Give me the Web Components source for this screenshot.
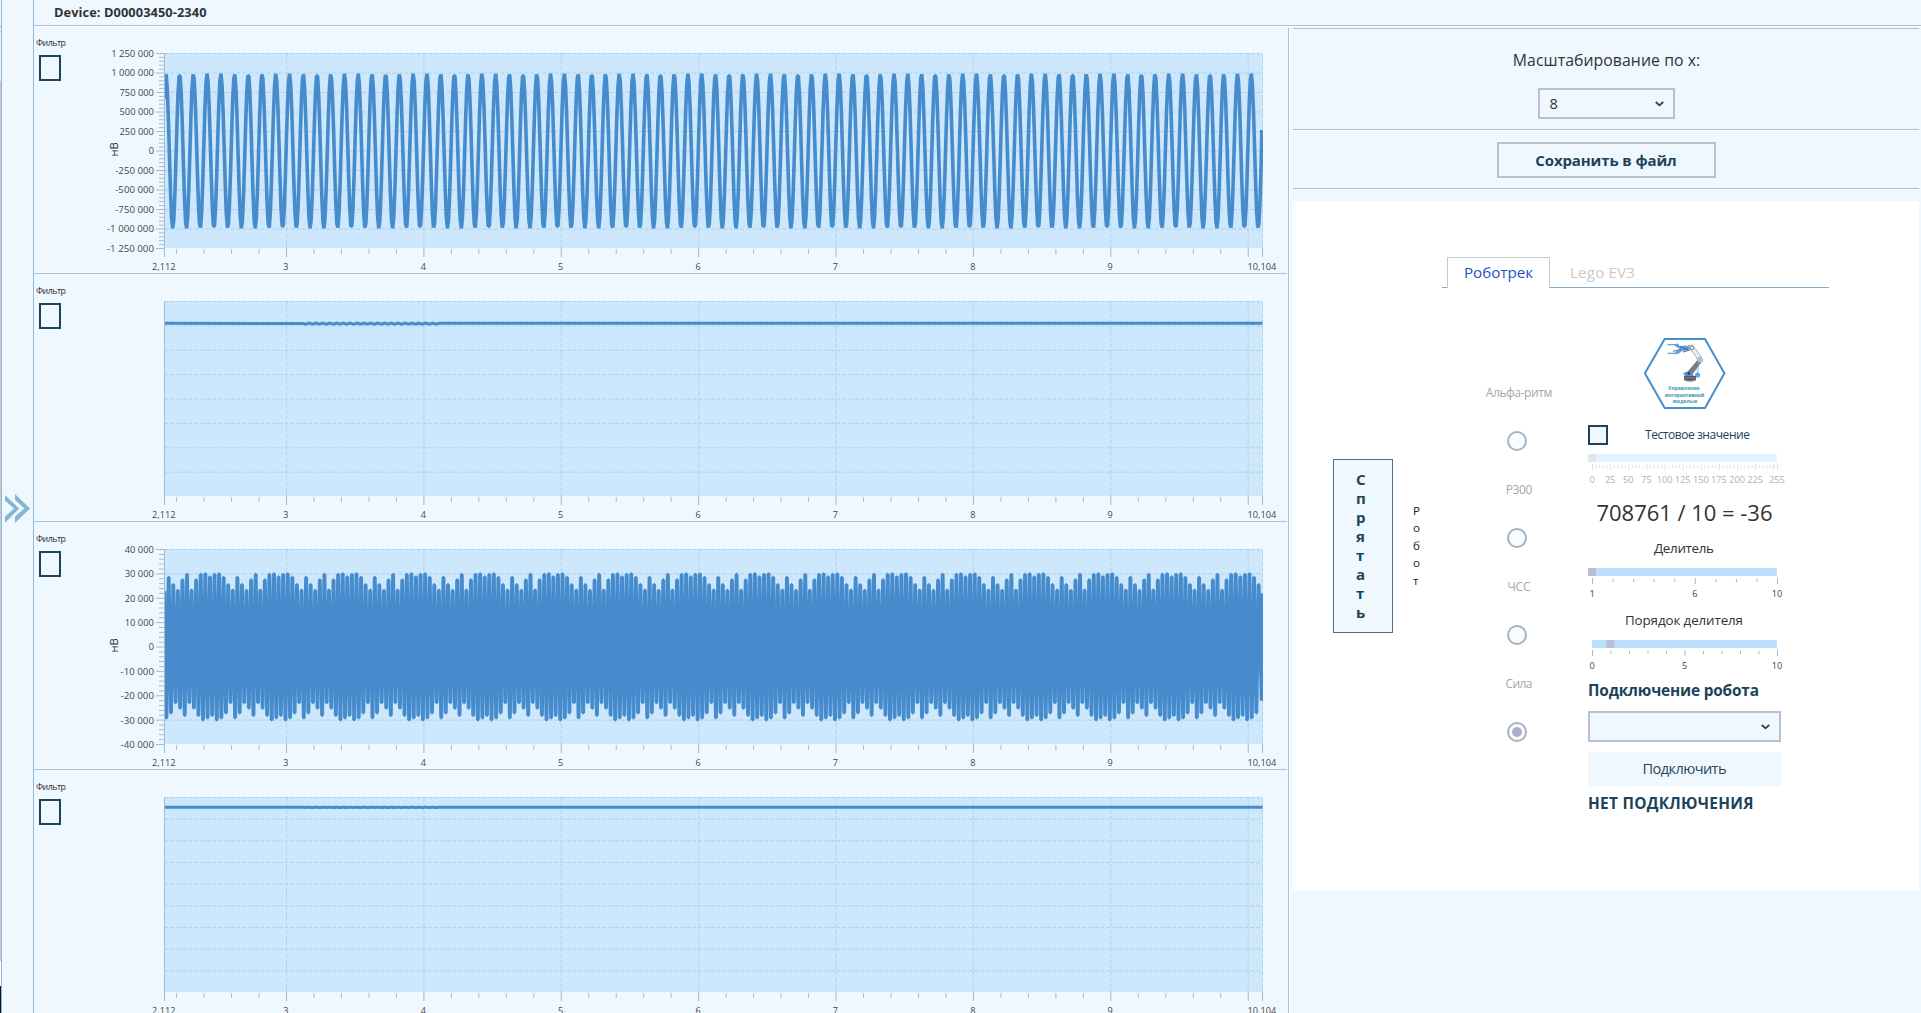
<!DOCTYPE html>
<html lang="ru">
<head>
<meta charset="utf-8">
<title>Device: D00003450-2340</title>
<style>
html,body{margin:0;height:100%;overflow:hidden;background:#f0f8ff;font-family:"Open Sans","Noto Sans",sans-serif;color:#333}
</style>
</head>
<body>
<device-page></device-page>
<script>
const FONT = '"Open Sans","Noto Sans",sans-serif';
const define = (name, cls) => customElements.define(name, cls);
class Base extends HTMLElement {
  constructor(){ super(); this.attachShadow({mode:'open'}); }
  connectedCallback(){ if(!this.shadowRoot.firstChild){ this.shadowRoot.innerHTML = this.render(); this.ready && this.ready(); } }
  num(n, d=0){ return this.hasAttribute(n) ? +this.getAttribute(n) : d; }
}

/* A single line of text tracked to a given width. */
define('fit-text', class extends Base {
  render(){ return `<style>:host{display:block;white-space:nowrap;width:${this.num('w')}px;height:1lh}span{display:inline-block}</style><span>${this.getAttribute('text')}</span>`; }
  ready(){
    const s = this.shadowRoot.querySelector('span'), n = this.getAttribute('text').length;
    const nat = s.getBoundingClientRect().width;
    if(n > 1 && nat) s.style.letterSpacing = ((this.num('w') - nat) / (n - 1)).toFixed(3) + 'px';
  }
});

define('side-rail', class extends Base {
  render(){ return `<style>
  :host{display:flex;width:34px;box-sizing:border-box;border-right:1px solid #8fb6dc;flex:none}
  .edge{width:1px;border-right:1px solid #8fb6dc;background:linear-gradient(#f0f8ff 26px,#a8b8c4 26px 27px,#e6f1fb 27px 81px,#c9c9c9 81px 961px,#fff 961px 986px,#10131c 986px)}
  svg{margin:494px 0 0 3px}
  </style><div class="edge"></div>
  <svg width="26" height="30" fill="#83b8d1"><path d="M0 1L14.2 14.6L0 29V22.6L9 14.6L0 6.6Z"/><path d="M10 0L25 14.5L10 29V22.6L19.2 14.5L10 6Z"/></svg>`; }
});

define('top-bar', class extends Base {
  render(){ return `<style>
  :host{display:block;height:25px;border-bottom:1px solid #a9c3d6;box-shadow:0 1px #fafdff;padding-left:20px;position:relative}
  fit-text{font:bold 12.8px/25px ${FONT};color:#2f3337}
  </style><fit-text w="152.5" text="${this.getAttribute('text')}"></fit-text>`; }
});

define('check-box', class extends Base {
  render(){ return `<style>:host{display:block;box-sizing:border-box;border:2px solid #1c4359;background:#f0f8ff;flex:none;width:${this.num('w')}px;height:${this.num('h')}px}</style>`; }
});

/* Chart with axes, dashed grid and a polyline series. */
define('signal-chart', class extends Base {
  render(){
    const ox = 100, X0 = 164.5 - ox, X1 = 1262.5 - ox, Y0 = 27.5, Y1 = 222.5, ppu = (X1 - X0) / 7.992;
    const n = this.num('rows', 8), step = (Y1 - Y0) / n, kind = this.getAttribute('kind');
    const labels = (this.getAttribute('labels') || '').split('|').filter(Boolean);
    const x = v => X0 + (v - 2.112) * ppu;
    let grid = '', ticks = '', txt = '';
    for(let i = 0; i < n; i++) grid += `M${X0} ${Y0 + i*step}H${X1}`;
    for(let v = 3; v <= 10; v++) grid += `M${x(v)} ${Y0}V${Y1}`;
    grid += `M${X1} ${Y0}V${Y1}`;
    for(let k = 0; k < 40; k++){ const v = 2.2 + k*.2; if(v > 10.1) break;
      const major = Math.abs(v - Math.round(v)) < .01;
      ticks += major ? `M${x(v)} 222V231` : `M${x(v)} 223V228`; }
    ticks += `M${X0} ${Y0 - .5}V231M${X1} 222V231`;
    const xt = (p, s, w) => `<text x="${p}" y="244" textLength="${w}" lengthAdjust="spacingAndGlyphs" text-anchor="middle">${s}</text>`;
    txt += xt(X0 - .8, '2,112', 23.4);
    for(let v = 3; v <= 9; v++) txt += xt(x(v) - .6, v, 5.2);
    txt += xt(X1 - .6, '10,104', 28.6);
    if(labels.length){
      labels.forEach((l, i) => { const y = Y0 + i*step;
        const c = l.replace('-', ''), w = c.length*5.25 - (c.split(' ').length - 1)*2.2 + (l[0] === '-' ? 4.2 : 0);
        txt += `<text x="${154 - ox}" y="${y + 3.4}" text-anchor="end" textLength="${w}" lengthAdjust="spacingAndGlyphs">${l}</text>`;
        ticks += `M${156 - ox} ${y}H${X0}`;
        if(i < n) for(let m = 1; m < 5; m++) ticks += `M${159 - ox} ${y + m*step/5}H${X0}`; });
      txt += `<text transform="translate(18 130.6) rotate(-90)" font-size="11.2" fill="#2b2b2b">нВ</text>`;
    }
    const pts = [];
    const mid = (Y0 + Y1)/2;
    if(kind === 'sine'){
      const P = ppu*.1, pk = 207.1 - ox, dx = ppu*.5/64;
      for(let q = X0 - dx*.4; q < X1 - 1; q += dx) pts.push([q, mid - 77.4*Math.cos((q - pk)/P*2*Math.PI)]);
      pts.push([X1 - 1, 122], [X1 - .7, 104]);
    } else if(kind === 'dense'){
      const hi = [28.5,25.5,23.2,27.5,29.7,23.3,27.5,29.7,30,28.7,29.7,30,28.5,25.5,23.3];
      const lo = [29,27,22.8,25,28,22.8,25,28,29.8,29,28,29.8,29,27,22.8];
      const k = 195/80, P = ppu/30;
      pts.push([X0, mid - 23*k]);
      for(let i = 0; ; i++){
        const a = 166.4 - ox + i*P; if(a > X1 - 2) break;
        pts.push([a - .2, mid + lo[i%15]*k], [a + .2, mid + lo[i%15]*k]);
        pts.push([a + P/2 - .2, mid - hi[i%15]*k], [a + P/2 + .2, mid - hi[i%15]*k]);
      }
      pts.push([X1 - 1, mid + 22*k], [X1, mid - 22*k]);
    } else {
      const y = this.num('level'), amp = this.num('ripple');
      pts.push([X0, y]);
      for(let q = 304; q <= 438; q += .5) pts.push([q - ox, y + amp*(.6 + Math.sin((q - 304)/3.43*Math.PI))]);
      pts.push([440 - ox, y], [X1, y]);
    }
    return `<style>:host{display:block}svg{display:block}text{font-family:${FONT}}</style>
    <svg width="1187" height="247" font-size="9.4" fill="#464646">
    <clipPath id="c"><rect x="${X0 + .5}" y="27" width="${X1 - X0}" height="195"/></clipPath>
    <rect x="${X0 + .5}" y="27" width="${X1 - X0}" height="195" fill="#cde7fc"/>
    <path d="${grid}" stroke="#b3d0e5" stroke-dasharray="4 2" fill="none"/>
    <path d="${ticks}" stroke="#a3bbce" fill="none"/>
    <polyline clip-path="url(#c)" points="${pts.map(p => p[0].toFixed(2) + ',' + p[1].toFixed(2)).join(' ')}" fill="none" stroke="#468ccd" stroke-width="${kind === 'flat' ? 3 : kind === 'sine' ? 3.6 : 3.5}" stroke-linejoin="bevel"/>
    ${txt}</svg>`;
  }
});

define('chart-panel', class extends Base {
  render(){ return `<style>
  :host{display:flex;height:247px;width:1253px;border-bottom:1px solid #a9c3d6;flex:none}
  .f{width:64px;padding:10px 0 0 2px;flex:none}
  fit-text{font:8.8px/14px ${FONT};color:#2d2d2d}
  check-box{margin:5px 0 0 3px}
  </style><div class="f"><fit-text w="30" text="Фильтр"></fit-text><check-box w="22" h="26"></check-box></div><slot></slot>`; }
});

define('drop-down', class extends Base {
  render(){ return `<style>
  :host{display:flex;box-sizing:border-box;height:31px;width:${this.num('w')}px;border:2px solid #bbbfd6;background:#f0f8ff;align-items:center;justify-content:space-between;padding:0 9px 0 10px}
  span{font:14.6px/27px ${FONT};color:#333}
  </style><span>${this.getAttribute('value') || ''}</span><svg width="9" height="6"><path d="M.8 1L4.5 4.4L8.2 1" fill="none" stroke="#1c4359" stroke-width="1.7"/></svg>`; }
});

define('value-slider', class extends Base {
  render(){
    const min = this.num('min'), max = this.num('max'), step = this.num('step'), val = this.num('value');
    const dim = this.hasAttribute('dim'), px = v => 4.5 + (v - min)/(max - min)*185;
    const labels = this.getAttribute('labels').split(',').map(Number);
    let t = '', s = '';
    for(let v = min; v <= max; v += step) if(!labels.includes(v)) t += `M${px(v)} 11V14`;
    if(dim) t += `M${px(250)} 10V16`;
    labels.forEach(v => { t += `M${px(v)} 10V16`;
      const w = String(v).length*5.25;
      s += `<text x="${px(v) - .5}" y="29" text-anchor="middle" textLength="${w}" lengthAdjust="spacingAndGlyphs">${v}</text>`; });
    const th = px(val) - 4.5, left = Math.min(4, th);
    return `<style>:host{display:block;height:34px;width:193px}svg{display:block;overflow:visible}text{font-family:${FONT}}</style>
    <svg width="193" height="34" font-size="9.4" fill="${dim ? '#b0b0b0' : '#464646'}">
    <rect x="${left}" y="0" width="${189 - left}" height="8" fill="${dim ? '#e4f2ff' : '#bbdfff'}"/>
    <rect x="${th}" y="0" width="8" height="8" fill="${dim ? '#e3e5ee' : '#b9bfd5'}"/>
    <path d="${t}" stroke="${dim ? '#d9e2ea' : '#a1b9cd'}"/>${s}</svg>`;
  }
});

define('robot-logo', class extends Base {
  render(){ return `<style>:host{display:block;width:82px;height:71px}svg{display:block}text{font:bold 4.9px ${FONT}}</style>
  <svg width="82" height="71" fill="none">
  <path d="M.9 35.3L20.7 1H61L80.4 35.3L61 70.1H20.7Z" fill="#fff" stroke="#468fcb" stroke-width="2"/>
  <path d="M23.5 6.8H31L34 8.4M23.5 15.2H31L36 13" stroke="#4a86bd" stroke-width="1.1"/>
  <path d="M30 6.2L34 5.4L35.5 8L42 7.6L47 9.2L44 12.6L38 13L35 15.6L30 16.6L32 13.4L37 11.4L32 8.8Z" fill="#5f9fdb"/>
  <path d="M29 13.4L37 11.2M36 8.6L44 11.6M39 14L46 12" stroke="#3f5d80" stroke-width=".9"/>
  <path d="M44 7.6L48.5 7L50.5 9.6L57.5 19.5L54.8 22.6L47.2 12Z" fill="#eceff2" stroke="#87919b" stroke-width=".7"/>
  <circle cx="47.8" cy="9.8" r="2" fill="#dde6ee" stroke="#66727e" stroke-width=".8"/>
  <path d="M53.4 22.6L57.3 24L48.3 36L43 34.8Z" fill="#777b82" stroke="#575a61" stroke-width=".5"/>
  <circle cx="56" cy="22" r="2.5" fill="#e3e9ee" stroke="#818c97" stroke-width=".8"/><circle cx="56" cy="22" r="1" fill="#5c9bd8"/>
  <path d="M53.2 30V37M55 25L54 34" stroke="#8bb9e3" stroke-width=".7"/>
  <circle cx="53.6" cy="37" r="2.6" fill="#5ba0e0"/>
  <path d="M39 35.3L43 33.4L48.5 35L50 38H41Z" fill="#5296d8"/><circle cx="44.8" cy="35.5" r="1.4" fill="#27456b"/>
  <path d="M40 38H52V42.2Q46 44.6 40 42.2Z" fill="#55555a"/><path d="M40 39.8H52M40.3 41.8Q46 43.8 51.7 41.8" stroke="#a4a4a8" stroke-width=".6"/>
  <g fill="#3c96b4" text-anchor="middle"><text x="40" y="52" textLength="31.5">Управление</text><text x="40.5" y="58.8" textLength="39.5">интерактивной</text><text x="41" y="65.2" textLength="24.5">моделью</text></g>
  </svg>`; }
});

define('radio-item', class extends Base {
  render(){ const w = this.num('w'); return `<style>
  :host{display:flex;flex-direction:column;height:97px;width:70px;align-items:center}
  fit-text{font:12px/18px ${FONT};color:#a6a6a6}
  i{box-sizing:border-box;width:20px;height:20px;border:2px solid #a4b3bd;border-radius:50%;background:#fafdff;margin:29px 4px 0 0;display:flex;align-items:center;justify-content:center}
  :host([checked]) i::after{content:"";width:10px;height:10px;border-radius:50%;background:#aeadcf}
  </style><fit-text w="${w}" text="${this.getAttribute('label')}"></fit-text><i></i>`; }
});

define('tab-strip', class extends Base {
  render(){ return `<style>
  :host{display:flex;height:31px;width:387px}
  .g{border-bottom:1px solid #84aac6;width:5px}
  .t{box-sizing:border-box;width:103px;border:1px solid #c6cad0;border-bottom:0;padding:4px 0 0 16px;background:#fff}
  .o{flex:1;border-bottom:1px solid #84aac6;padding:5px 0 0 20px}
  fit-text{font:15.2px/20px ${FONT};color:#1f4fc4}.o fit-text{color:#cacaca}
  </style><div class="g"></div><div class="t"><fit-text w="69" text="Роботрек"></fit-text></div><div class="o"><fit-text w="65" text="Lego EV3"></fit-text></div>`; }
});

define('vertical-text', class extends Base {
  render(){ return `<style>:host{display:flex;flex-direction:column}span{display:block}</style>` + [...this.getAttribute('text')].map(c => `<span>${c}</span>`).join(''); }
});

define('robot-controls', class extends Base {
  render(){ return `<style>
  :host{display:flex;flex-direction:column;width:193px}
  .row{display:flex;margin-top:16px}
  .row fit-text{font:12px/19px ${FONT};color:#1c4359;margin-left:37px}
  .big{font:400 22px/30px ${FONT};color:#333;margin:9px 0 0 8.5px}
  .cap{font:13.4px/20px ${FONT};color:#333}
  .h{font:bold 15.4px/20px ${FONT};color:#1c4359}
  .btn{background:#f0f8ff;height:34px;margin-top:10px;display:flex;justify-content:center;font:14.6px/32px ${FONT};color:#26475c}
  robot-logo{margin-left:56px}
  </style>
  <robot-logo></robot-logo>
  <div class="row"><check-box w="20" h="20"></check-box><fit-text w="105" text="Тестовое значение"></fit-text></div>
  <value-slider dim style="margin-top:9px" min="0" max="255" step="5" value="0" labels="0,25,50,75,100,125,150,175,200,225,255"></value-slider>
  <fit-text class="big" w="176" text="708761 / 10 = -36"></fit-text>
  <fit-text class="cap" style="margin:11px 0 0 66px" w="60" text="Делитель"></fit-text>
  <value-slider style="margin-top:10px" min="1" max="10" step="1" value="1" labels="1,6,10"></value-slider>
  <fit-text class="cap" style="margin:8px 0 0 37px" w="118" text="Порядок делителя"></fit-text>
  <value-slider style="margin-top:10px" min="0" max="10" step="1" value="1" labels="0,5,10"></value-slider>
  <fit-text class="h" style="margin-top:7px" w="171" text="Подключение робота"></fit-text>
  <drop-down style="margin-top:10px" w="193"></drop-down>
  <div class="btn"><fit-text w="84" text="Подключить"></fit-text></div>
  <fit-text class="h" style="margin-top:8px" w="165.5" text="НЕТ ПОДКЛЮЧЕНИЯ"></fit-text>`; }
});

define('robot-card', class extends Base {
  render(){ return `<style>
  :host{display:flex;align-items:flex-start;box-sizing:border-box;width:626px;height:690px;background:#fff;margin-top:12px;padding-left:40px}
  .hide{box-sizing:border-box;width:60px;height:174px;margin-top:258px;border:1px solid #4d6b8d;background:#f0f8ff;padding:10px 0 0 22px;font:bold 15px/19px ${FONT};color:#1c4359}
  .bot{margin:301px 0 0 20px;width:29px;font:11.6px/17.4px ${FONT};color:#222}
  .main{margin-top:56px}
  .cols{display:flex}
  .radios{margin:96px 0 0 42px;width:104px}
  robot-controls{margin-top:50px}
  </style>
  <vertical-text class="hide" text="Спрятать"></vertical-text>
  <vertical-text class="bot" text="Робот"></vertical-text>
  <div class="main"><tab-strip></tab-strip>
    <div class="cols"><div class="radios">
      <radio-item w="66.5" label="Альфа-ритм"></radio-item><radio-item w="26.5" label="P300"></radio-item>
      <radio-item w="23" label="ЧСС"></radio-item><radio-item w="27" label="Сила" checked></radio-item></div>
      <robot-controls></robot-controls></div>
  </div>`; }
});

define('side-panel', class extends Base {
  render(){ return `<style>
  :host{display:block;margin-top:2px;border-left:1px solid #a9c3d6;box-shadow:inset 1px 0 #fbfdff;padding-left:4px;flex:1}
  section{box-sizing:border-box;width:626px;border-bottom:1px solid #a9c3d6;box-shadow:0 1px #fafdff;display:flex;flex-direction:column;align-items:center}
  .a{height:102px;border-top:1px solid #a9c3d6}
  .a fit-text{font:15.8px/22px ${FONT};margin:20px 0 0 1px}
  .a drop-down{margin-top:17px}
  .b{height:59px;padding-top:12px}
  button{box-sizing:border-box;width:219px;height:36px;margin:0;padding:0;border:2px solid #bbbfd6;background:#f0f8ff;display:flex;justify-content:center;font:bold 15px/32px ${FONT};color:#1c4359}
  </style>
  <section class="a"><fit-text w="187.5" text="Масштабирование по x:"></fit-text><drop-down w="137" value="8"></drop-down></section>
  <section class="b"><button><fit-text w="141.5" text="Сохранить в файл"></fit-text></button></section>
  <robot-card></robot-card>`; }
});

define('device-page', class extends Base {
  render(){ return `<style>
  :host{display:flex;width:1921px;height:1013px;overflow:hidden;background:#f0f8ff}
  .m{flex:1;display:flex;flex-direction:column}
  .r{display:flex;height:987px}
  .charts{width:1254px;height:987px;overflow:hidden;flex:none}
  </style>
  <side-rail></side-rail>
  <div class="m"><top-bar text="Device: D00003450-2340"></top-bar>
  <div class="r"><div class="charts">
    <chart-panel><signal-chart kind="sine" rows="10" labels="1 250 000|1 000 000|750 000|500 000|250 000|0|-250 000|-500 000|-750 000|-1 000 000|-1 250 000"></signal-chart></chart-panel>
    <chart-panel><signal-chart kind="flat" rows="8" level="49.3" ripple="0.5"></signal-chart></chart-panel>
    <chart-panel><signal-chart kind="dense" rows="8" labels="40 000|30 000|20 000|10 000|0|-10 000|-20 000|-30 000|-40 000"></signal-chart></chart-panel>
    <chart-panel><signal-chart kind="flat" rows="9" level="37.3" ripple="0.12"></signal-chart></chart-panel>
  </div><side-panel></side-panel></div></div>`; }
});
</script>
</body>
</html>
